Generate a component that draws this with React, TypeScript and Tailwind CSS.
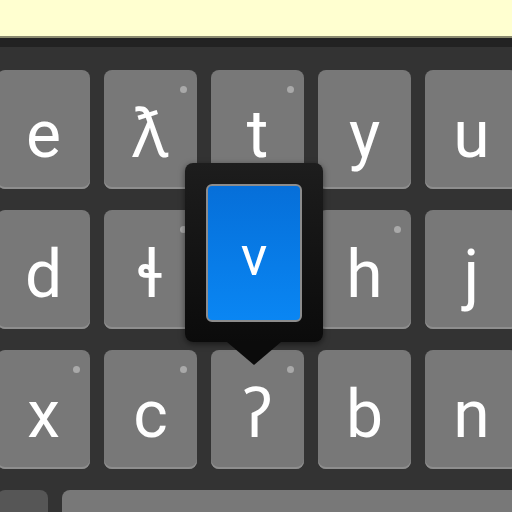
import React from 'react';

type KeyDef = { label: string; dot?: boolean };

// the key under the preview popup is fully covered, so it carries no label
const rows: KeyDef[][] = [
  [{ label: 'e' }, { label: 'ƛ', dot: true }, { label: 't', dot: true }, { label: 'y' }, { label: 'u' }],
  [{ label: 'd' }, { label: 'ɬ', dot: true }, { label: '' }, { label: 'h', dot: true }, { label: 'j' }],
  [{ label: 'x', dot: true }, { label: 'c', dot: true }, { label: 'ʔ', dot: true }, { label: 'b' }, { label: 'n' }],
];

const Key: React.FC<{ k: KeyDef }> = ({ k }) => (
  <div className="relative w-[93px] h-[119px] shrink-0 rounded-[8px] bg-[#787878] shadow-[inset_0_-2px_0_#8e8e8e] flex items-center justify-center pt-[10px]">
    {k.dot && <span className="absolute right-[10px] top-[16px] w-[7px] h-[7px] rounded-full bg-[#a9a9a9]" />}
    {k.label && <span className="text-white text-[66px] leading-[66px]">{k.label}</span>}
  </div>
);

export default function App() {
  return (
    <div className="relative w-[512px] h-[512px] overflow-hidden bg-[#333333] font-['Roboto','Noto_Sans','DejaVu_Sans',sans-serif]">
      {/* text area strip */}
      <div className="h-[38px] bg-[#ffffd0] border-b-2 border-[#8a8a70]" />
      <div className="h-[9px] bg-[#222222]" />

      {/* keyboard */}
      <div className="pt-[23px] flex flex-col gap-[21px]">
        {rows.map((row, i) => (
          <div key={i} className="flex gap-[14px] ml-[-3px]">
            {row.map((k, j) => (
              <Key key={j} k={k} />
            ))}
          </div>
        ))}
        <div className="flex gap-[14px] ml-[-3px]">
          <div className="w-[51px] h-[119px] shrink-0 rounded-[8px] bg-[#565656]" />
          <div className="w-[480px] h-[119px] shrink-0 rounded-[8px] bg-[#787878]" />
        </div>
      </div>

      {/* key preview popup */}
      <div className="absolute left-[185px] top-[163px] w-[138px] h-[179px] rounded-[8px] bg-gradient-to-b from-[#1d1d1d] to-[#0b0b0b] shadow-[0_2px_6px_rgba(0,0,0,0.5)] p-[21px]">
        <div className="w-[96px] h-[138px] rounded-[6px] border-2 border-[#8c8c8c] bg-gradient-to-b from-[#066fd9] to-[#0a86f3] flex items-center justify-center pt-[6px]">
          <span className="text-white text-[55px] leading-[55px]">v</span>
        </div>
      </div>
      <div className="absolute left-[227px] top-[342px] w-0 h-0 border-l-[27px] border-r-[27px] border-t-[23px] border-l-transparent border-r-transparent border-t-[#0b0b0b]" />
    </div>
  );
}
